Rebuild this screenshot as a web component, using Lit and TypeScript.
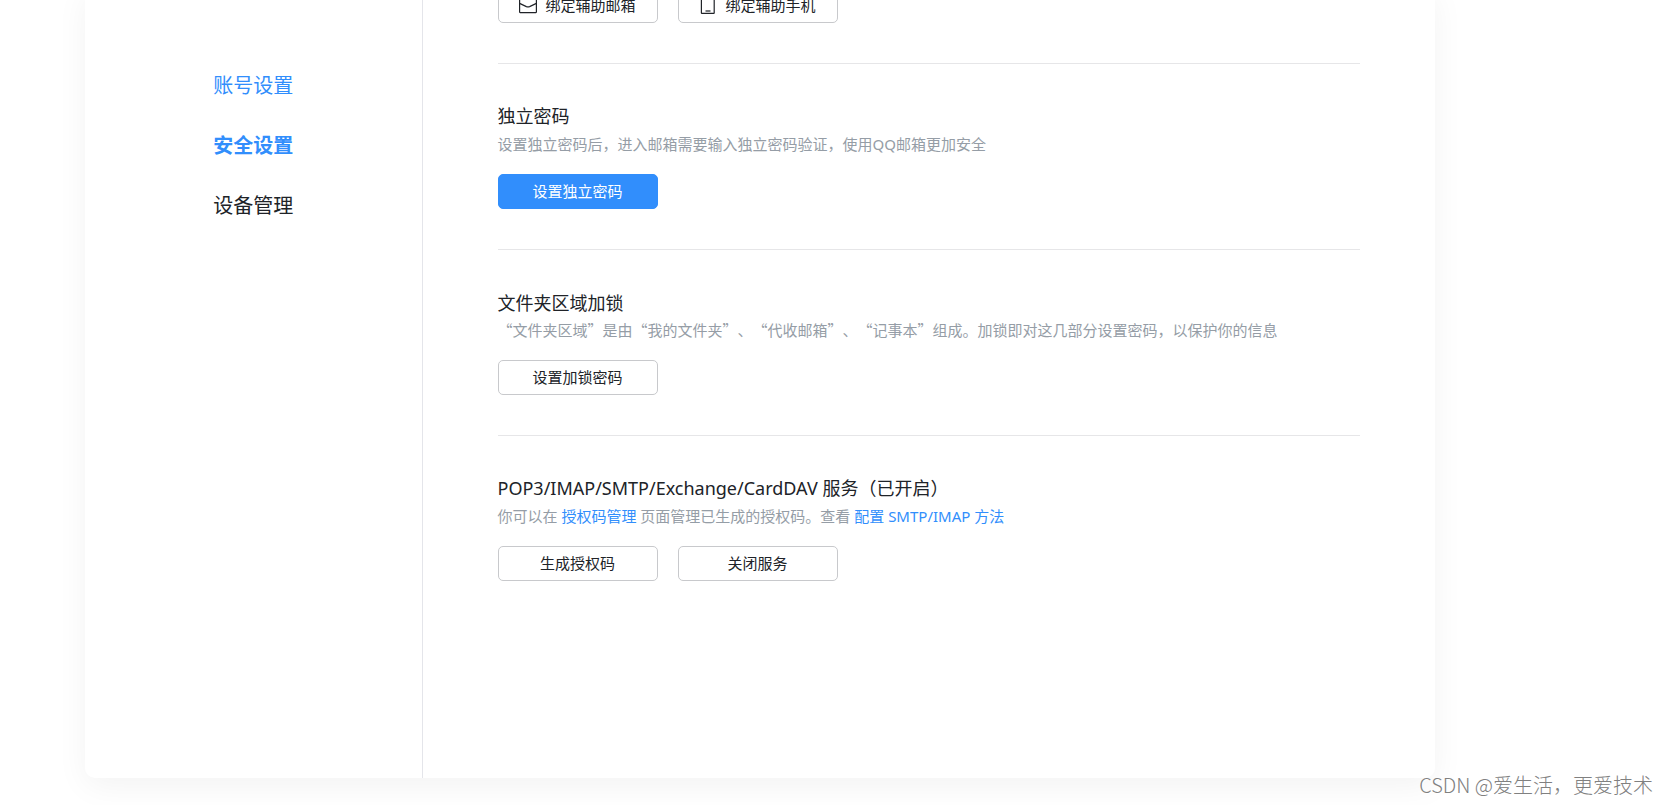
import { LitElement, html, css, svg, nothing, TemplateResult } from "lit";
import { customElement, property } from "lit/decorators.js";

const mailIcon = html`<svg class="icon" viewBox="0 0 18 18" aria-hidden="true">
  ${svg`<rect x="0.6" y="2.6" width="16.8" height="14" rx="0.5"/><path d="M0.6 7.4 L7.4 10.6 Q9 11.3 10.6 10.6 L17.4 7.4"/>`}
</svg>`;

const phoneIcon = html`<svg class="icon" viewBox="0 0 18 18" aria-hidden="true">
  ${svg`<rect x="2.4" y="0.6" width="12.8" height="16.8" rx="0.5"/><path d="M6.5 15 H11.5"/>`}
</svg>`;

@customElement("setting-section")
export class SettingSection extends LitElement {
  @property() heading = "";
  @property({ attribute: false }) description: TemplateResult | string = "";

  static styles = css`
    :host {
      display: block;
      padding: 38px 0 40px;
      border-top: 1px solid #e6e6e8;
      font-family: "Noto Sans", "Noto Sans CJK SC", sans-serif;
    }
    :host([first]) {
      padding-top: 0;
      border-top: 0;
    }
    :host([quoted]) {
      font-family: "Noto Sans CJK SC", sans-serif;
    }
    .heading {
      margin: 0;
      font-size: 18px;
      line-height: 28px;
      font-weight: inherit;
      color: #202328;
    }
    .description {
      margin: 0 0 16px;
      font-size: 15px;
      line-height: 28px;
      color: #959da6;
    }
    .link {
      color: #318efc;
      text-decoration: none;
    }
    .actions {
      display: flex;
      flex-wrap: wrap;
      gap: 20px;
    }
  `;

  render() {
    return html`
      ${this.heading ? html`<h2 class="heading">${this.heading}</h2>` : nothing}
      ${this.description ? html`<p class="description">${this.description}</p>` : nothing}
      <div class="actions"><slot></slot></div>
    `;
  }
}

@customElement("app-root")
export class AppRoot extends LitElement {
  static styles = css`
    :host {
      display: block;
      position: relative;
      box-sizing: border-box;
      height: 100vh;
      overflow: hidden;
      background: #fff;
      color: #202328;
      font-family: "Noto Sans CJK SC", sans-serif;
      font-weight: 400;
      text-spacing-trim: space-all;
    }
    .card {
      display: flex;
      margin: -12px 233px 0 85px;
      background: #fff;
      border-radius: 0 0 10px 10px;
      box-shadow: 0 8px 32px rgba(0, 0, 0, 0.05);
    }
    .sidebar {
      flex: 0 0 25%;
      box-sizing: border-box;
      padding-top: 67px;
      border-right: 1px solid #e4e5ea;
      display: flex;
      flex-direction: column;
      align-items: center;
    }
    .nav-link {
      font-size: 20px;
      line-height: 60px;
      color: #202328;
      text-decoration: none;
    }
    .nav-link.visited {
      color: #318efc;
    }
    .nav-link.active {
      color: #318efc;
      font-weight: 700;
    }
    .content {
      flex: 1;
      min-width: 0;
      padding: 0 75px 157px;
    }
    .button {
      box-sizing: border-box;
      width: 160px;
      height: 35px;
      padding: 0 0 2px;
      display: flex;
      align-items: center;
      justify-content: center;
      gap: 8px;
      border: 1px solid #c8c9cc;
      border-radius: 5px;
      background: #fff;
      color: #202328;
      font-family: "Noto Sans CJK SC", sans-serif;
      font-weight: inherit;
      font-size: 15px;
      line-height: 20px;
      cursor: pointer;
    }
    .button.primary {
      border-color: #318efc;
      background: #318efc;
      color: #fff;
    }
    .icon {
      width: 18px;
      height: 18px;
      fill: none;
      stroke: #202328;
      stroke-width: 1.2;
    }
    .watermark {
      position: absolute;
      right: 15px;
      bottom: 5px;
      font-size: 20px;
      font-weight: 300;
      line-height: 30px;
      color: #808080;
      text-shadow: 1px 1px 1px #fff;
    }
  `;

  render() {
    return html`
      <div class="card" lang="zh-CN">
        <nav class="sidebar">
          <a class="nav-link visited" href="#account">账号设置</a>
          <a class="nav-link active" href="#security" aria-current="page">安全设置</a>
          <a class="nav-link" href="#devices">设备管理</a>
        </nav>
        <main class="content">
          <setting-section first>
            <button class="button" type="button">${mailIcon}绑定辅助邮箱</button>
            <button class="button" type="button">${phoneIcon}绑定辅助手机</button>
          </setting-section>
          <setting-section
            heading="独立密码"
            .description=${"设置独立密码后，进入邮箱需要输入独立密码验证，使用QQ邮箱更加安全"}
          >
            <button class="button primary" type="button">设置独立密码</button>
          </setting-section>
          <setting-section
            quoted
            heading="文件夹区域加锁"
            .description=${"“文件夹区域”是由“我的文件夹”、“代收邮箱”、“记事本”组成。加锁即对这几部分设置密码，以保护你的信息"}
          >
            <button class="button" type="button">设置加锁密码</button>
          </setting-section>
          <setting-section
            heading="POP3/IMAP/SMTP/Exchange/CardDAV 服务（已开启）"
            .description=${html`你可以在 <a class="link" href="#codes">授权码管理</a> 页面管理已生成的授权码。查看 <a class="link" href="#help">配置 SMTP/IMAP 方法</a>`}
          >
            <button class="button" type="button">生成授权码</button>
            <button class="button" type="button">关闭服务</button>
          </setting-section>
        </main>
      </div>
      <div class="watermark" lang="zh-CN">CSDN @爱生活，更爱技术</div>
    `;
  }
}
